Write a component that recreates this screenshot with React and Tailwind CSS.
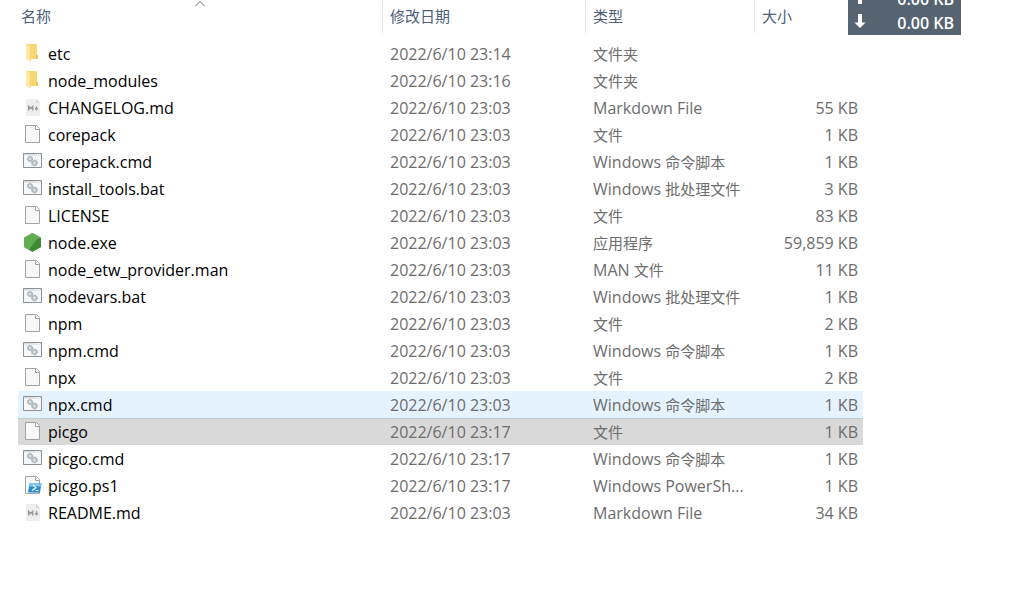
import React from "react";

const files = [
  ["folder", "etc", "2022/6/10 23:14", "文件夹", ""],
  ["folder", "node_modules", "2022/6/10 23:16", "文件夹", ""],
  ["markdown", "CHANGELOG.md", "2022/6/10 23:03", "Markdown File", "55 KB"],
  ["file", "corepack", "2022/6/10 23:03", "文件", "1 KB"],
  ["script", "corepack.cmd", "2022/6/10 23:03", "Windows 命令脚本", "1 KB"],
  ["script", "install_tools.bat", "2022/6/10 23:03", "Windows 批处理文件", "3 KB"],
  ["file", "LICENSE", "2022/6/10 23:03", "文件", "83 KB"],
  ["node", "node.exe", "2022/6/10 23:03", "应用程序", "59,859 KB"],
  ["file", "node_etw_provider.man", "2022/6/10 23:03", "MAN 文件", "11 KB"],
  ["script", "nodevars.bat", "2022/6/10 23:03", "Windows 批处理文件", "1 KB"],
  ["file", "npm", "2022/6/10 23:03", "文件", "2 KB"],
  ["script", "npm.cmd", "2022/6/10 23:03", "Windows 命令脚本", "1 KB"],
  ["file", "npx", "2022/6/10 23:03", "文件", "2 KB"],
  ["script", "npx.cmd", "2022/6/10 23:03", "Windows 命令脚本", "1 KB"],
  ["file", "picgo", "2022/6/10 23:17", "文件", "1 KB"],
  ["script", "picgo.cmd", "2022/6/10 23:17", "Windows 命令脚本", "1 KB"],
  ["powershell", "picgo.ps1", "2022/6/10 23:17", "Windows PowerSh...", "1 KB"],
  ["markdown", "README.md", "2022/6/10 23:03", "Markdown File", "34 KB"],
];

const rowStyle = {
  "npx.cmd": "bg-[#e5f3ff]",
  picgo: "bg-[#d9d9d9] shadow-[inset_0_1px_0_#bccbd8]",
};

function Page() {
  return (
    <>
      <path d="M2.5 .5h11l3 3v14h-14z" fill="#f8f8f8" stroke="#a3a3a3" />
      <path d="M12.5 .5v4h4" fill="#fff" stroke="#a3a3a3" />
    </>
  );
}

function Gear({ x, y, r }) {
  return (
    <g>
      <circle cx={x} cy={y} r={r} fill="#c3cbd0" stroke="#b3bbc0" strokeWidth="1" />
      <circle cx={x} cy={y} r={r + 0.3} fill="none" stroke="#929ca3" strokeWidth="0.9" strokeDasharray="1 1.2" />
      <circle cx={x} cy={y} r="0.8" fill="#f4f6f7" />
    </g>
  );
}

function FileIcon({ kind }) {
  return (
    <svg className="mt-[2px] size-5 shrink-0" viewBox="0 0 20 20" aria-hidden="true">
      {kind === "folder" && (
        <>
          <path d="M4 0h9q1 0 1 1v14H4z" fill="#f8d775" />
          <path d="M13 11h2v4h-2z" fill="#edc65f" />
          <path d="M3 0l4.2 2.4v15L3 15z" fill="#ffe9a5" />
          <path d="M7.2 2.5v14.8" stroke="#f3d27a" strokeWidth="0.6" />
        </>
      )}
      {kind === "file" && <Page />}
      {kind === "markdown" && (
        <>
          <path d="M4 1h9l4 4v12q0 1-1 1H4q-1 0-1-1V2q0-1 1-1z" fill="#eeeeee" />
          <path d="M13 1v4h4z" fill="#d5d5d5" />
          <path d="M5.7 12.500V8.500l2 2 2-2v4" fill="none" stroke="#999" strokeWidth="1.5" />
          <path d="M13.500 8v3M12 10.300h3l-1.500 2z" fill="#999" stroke="#999" strokeWidth="1" />
        </>
      )}
      {kind === "script" && (
        <>
          <path d="M.5 1.5h18v14H.5z" fill="#f6f7f8" stroke="#8b9196" />
          <path d="M1 2h17v1.5H1z" fill="#d9dde0" />
          <path d="M12 2.5h5" stroke="#fff" strokeDasharray="1 1" />
          <Gear x={7} y={7} r={2.3} />
          <Gear x={11.5} y={11} r={2.6} />
        </>
      )}
      {kind === "node" && (
        <>
          <path d="M9.5 0L18 4.7V14l-8.5 4.8L1 14V4.7z" fill="#4a9a40" />
          <path d="M9.5 0L18 4.7l-4 1.5L6 16.8 1 14V4.7z" fill="#62ad52" />
          <path d="M14 6.2l4-1.5V14l-8.5 4.8L6 16.8z" fill="#3f8936" />
        </>
      )}
      {kind === "powershell" && (
        <>
          <Page />
          <path d="M6.5 7.5H18.5L17 16.5H5z" fill="#2b8ccb" />
          <path d="M6.5 7.5h12l-.5 3H6z" fill="#7ac8ec" />
          <path d="M10 9l3 2.7-4 2.8M12.5 14.5h3" fill="none" stroke="#fff" strokeWidth="1.2" />
        </>
      )}
    </svg>
  );
}

function TypeLabel({ text }) {
  return text.split(/([\u4e00-\u9fff]+)/).map((part, i) => (
    <span key={i} className={i % 2 ? "text-[15px]" : "text-base"}>
      {part}
    </span>
  ));
}

function Speed({ up }) {
  return (
    <div className="flex h-6 items-center justify-between pr-[7px] pl-[6px]">
      <svg className={up ? "mb-1 h-4 w-3" : "mb-1 h-4 w-3 rotate-180"} viewBox="0 0 12 16" aria-hidden="true">
        <path d="M6 1l5.5 5.5H8V15H4V6.5H.5z" fill="#fff" />
      </svg>
      <span>0.00 KB</span>
    </div>
  );
}

export default function App() {
  return (
    <main className="relative min-h-screen overflow-hidden bg-white pr-[159px] pl-[18px] font-['Open_Sans','Noto_Sans_CJK_SC',sans-serif] text-base text-[#6d6d6d]">
      <table className="w-full table-fixed border-separate border-spacing-0 whitespace-nowrap">
        <colgroup>
          <col />
          <col className="w-[203px]" />
          <col className="w-[169px]" />
          <col className="w-[108px]" />
        </colgroup>
        <thead className="text-left text-[15px] leading-8 text-[#4c607a]">
          <tr>
            <th className="relative h-[33px] border-r border-[#e5e5e5] p-0 pb-px pl-[3px] font-normal">
              名称
              <svg className="absolute top-0 left-1/2 h-2 w-3 -translate-x-1/2" viewBox="0 0 12 8" fill="none" aria-hidden="true">
                <path d="M1.5 6L6 1.5 10.5 6" stroke="#6d6d6d" />
              </svg>
            </th>
            <th className="border-r border-[#e5e5e5] p-0 pb-px pl-[7px] font-normal">修改日期</th>
            <th className="border-r border-[#e5e5e5] p-0 pb-px pl-[7px] font-normal">类型</th>
            <th className="p-0 pb-px pl-[7px] font-normal">大小</th>
          </tr>
        </thead>
        <tbody className="leading-[25px]">
          <tr aria-hidden="true">
            <td colSpan={4} className="h-[7px] p-0" />
          </tr>
          {files.map(([kind, name, date, type, size]) => (
            <tr key={name} className={rowStyle[name]}>
              <td className="h-[27px] p-0 pl-[5px] text-black">
                <div className="flex h-[27px] items-start gap-[5px] pt-[2px]">
                  <FileIcon kind={kind} />
                  <span>{name}</span>
                </div>
              </td>
              <td className="p-0 pt-[2px] pl-[7px]">{date}</td>
              <td className="p-0 pt-[2px] pl-[7px]">
                <TypeLabel text={type} />
              </td>
              <td className="p-0 pt-[2px] pr-[5px] text-right">{size}</td>
            </tr>
          ))}
        </tbody>
      </table>
      <aside className="absolute top-0 right-[61px] flex h-[35px] w-[113px] flex-col justify-end overflow-hidden bg-[#566472] font-['Open_Sans',sans-serif] text-base font-semibold text-white">
        <Speed up />
        <Speed />
      </aside>
    </main>
  );
}
